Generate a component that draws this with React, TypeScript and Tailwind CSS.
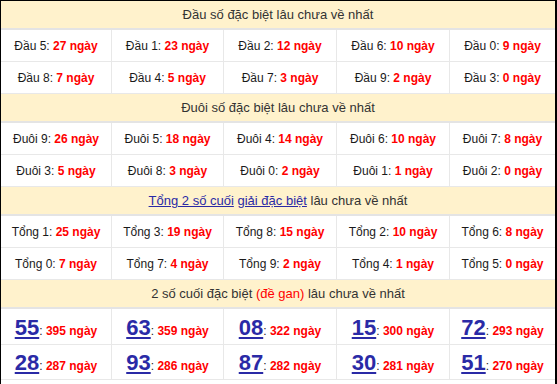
import React from "react";

type Cell = [string, string];

const sections: { title: React.ReactNode; rows: Cell[][] }[] = [
  {
    title: <>Đầu số đặc biệt lâu chưa về nhất</>,
    rows: [
      [["Đầu 5", "27"], ["Đầu 1", "23"], ["Đầu 2", "12"], ["Đầu 6", "10"], ["Đầu 0", "9"]],
      [["Đầu 8", "7"], ["Đầu 4", "5"], ["Đầu 7", "3"], ["Đầu 9", "2"], ["Đầu 3", "0"]],
    ],
  },
  {
    title: <>Đuôi số đặc biệt lâu chưa về nhất</>,
    rows: [
      [["Đuôi 9", "26"], ["Đuôi 5", "18"], ["Đuôi 4", "14"], ["Đuôi 6", "10"], ["Đuôi 7", "8"]],
      [["Đuôi 3", "5"], ["Đuôi 8", "3"], ["Đuôi 0", "2"], ["Đuôi 1", "1"], ["Đuôi 2", "0"]],
    ],
  },
  {
    title: (
      <>
        <a href="#" className="text-[#2a2aa6] underline">Tổng 2 số cuối</a>{" "}
        <a href="#" className="text-[#2a2aa6] underline">giải đặc biệt</a> lâu chưa về nhất
      </>
    ),
    rows: [
      [["Tổng 1", "25"], ["Tổng 3", "19"], ["Tổng 8", "15"], ["Tổng 2", "10"], ["Tổng 6", "8"]],
      [["Tổng 0", "7"], ["Tổng 7", "4"], ["Tổng 9", "2"], ["Tổng 4", "1"], ["Tổng 5", "0"]],
    ],
  },
];

const gan: Cell[][] = [
  [["55", "395"], ["63", "359"], ["08", "322"], ["15", "300"], ["72", "293"]],
  [["28", "287"], ["93", "286"], ["87", "282"], ["30", "281"], ["51", "270"]],
];

const colW = ["w-[110px]", "w-[112px]", "w-[113px]", "w-[113px]", "w-[106px]"];

function Header({ children }: { children: React.ReactNode }) {
  return (
    <div className="h-[29px] bg-[#fff2cc] border-b-2 border-[#e4e4e4] flex items-center justify-center text-[13px] text-[#333]">
      <span className="whitespace-nowrap">{children}</span>
    </div>
  );
}

export default function App() {
  return (
    <div
      className="w-[557px] h-[384px] bg-black pt-px pl-px pr-[2px] pb-px"
      style={{ fontFamily: '"Liberation Sans", Arial, sans-serif' }}
    >
      <div className="w-[554px] h-[383px] bg-white">
        {sections.map((s, si) => (
          <div key={si}>
            <Header>{s.title}</Header>
            {s.rows.map((r, ri) => (
              <div key={ri} className="flex h-[32px] border-b border-[#e8e8e8]">
                {r.map(([l, v], ci) => (
                  <div
                    key={ci}
                    className={`${colW[ci]} ${ci > 0 ? "border-l border-[#e8e8e8]" : ""} flex items-center justify-center text-[12px] text-[#1a1a1a] whitespace-nowrap`}
                  >
                    <span>
                      {l}: <span className="text-[#ff0000] font-bold">{v} ngày</span>
                    </span>
                  </div>
                ))}
              </div>
            ))}
          </div>
        ))}
        <Header>
          2 số cuối đặc biệt <span className="text-[#ff0000]">(đề gan)</span> lâu chưa về nhất
        </Header>
        {gan.map((r, ri) => (
          <div key={ri} className={`flex ${ri === 0 ? "h-[36px]" : "h-[35px]"} border-b border-[#e8e8e8]`}>
            {r.map(([n, v], ci) => (
              <div
                key={ci}
                className={`${colW[ci]} ${ci > 0 ? "border-l border-[#e8e8e8]" : ""} flex items-center justify-center pt-[1px] whitespace-nowrap`}
              >
                <span>
                  <a href="#" className="text-[22px] font-bold text-[#2a2aa6] underline">{n}</a>
                  <span className="text-[12px] text-[#1a1a1a]">: </span>
                  <span className="text-[12px] text-[#ff0000] font-bold">{v} ngày</span>
                </span>
              </div>
            ))}
          </div>
        ))}
      </div>
    </div>
  );
}
